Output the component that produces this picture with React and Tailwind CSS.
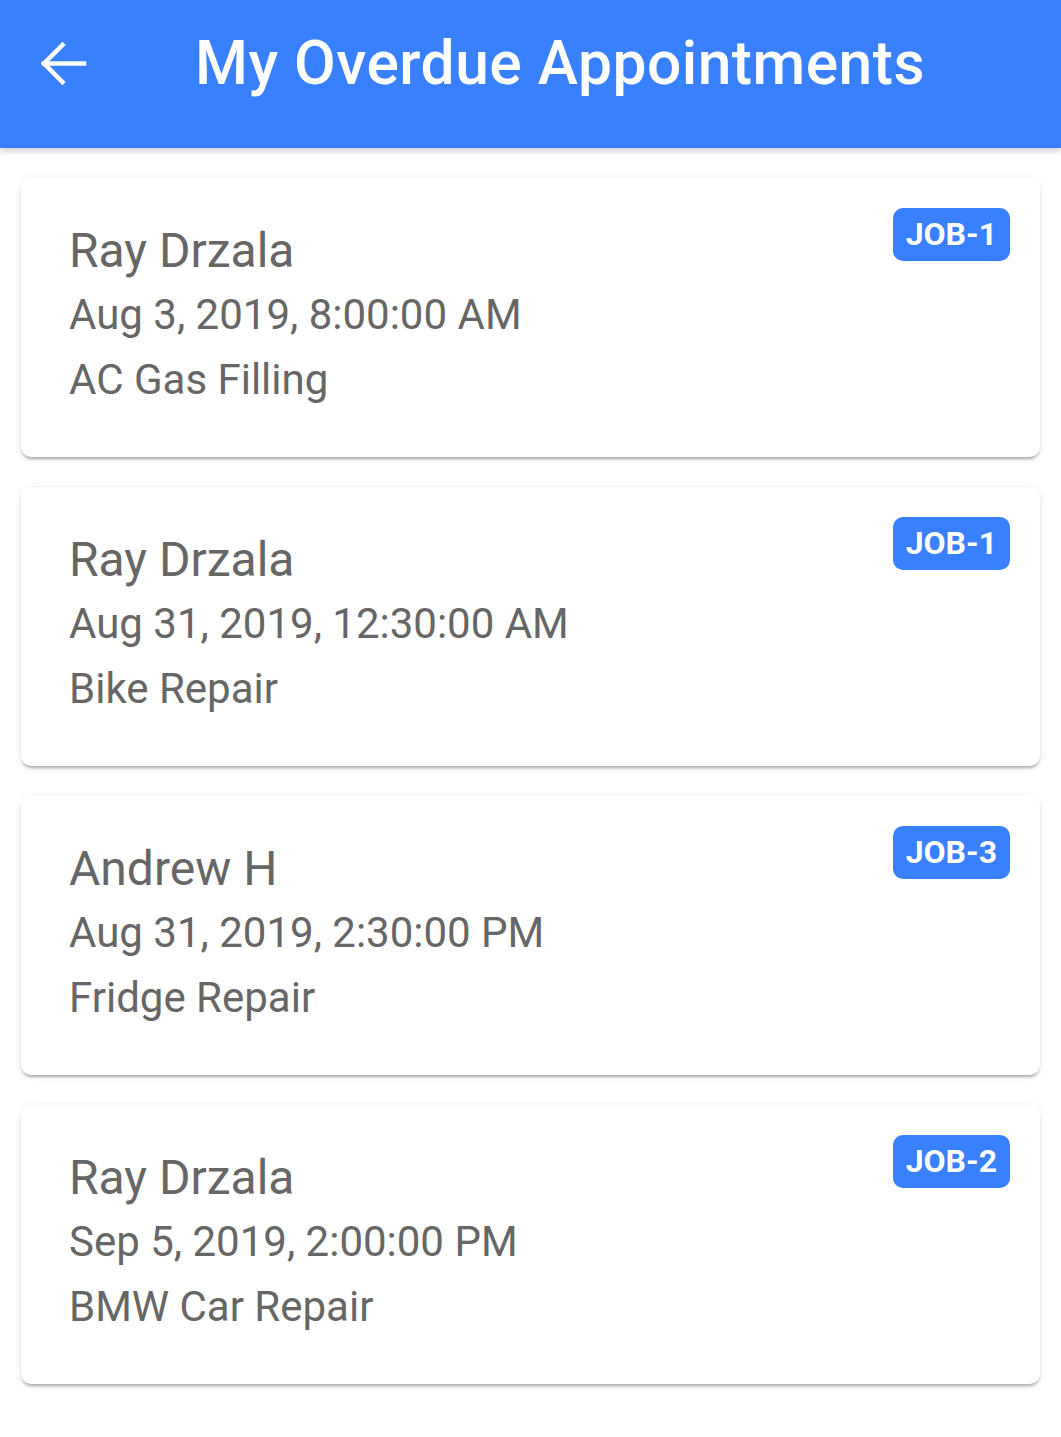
import React from "react";

const appointments = [
  { name: "Ray Drzala", date: "Aug 3, 2019, 8:00:00 AM", service: "AC Gas Filling", job: "JOB-1" },
  { name: "Ray Drzala", date: "Aug 31, 2019, 12:30:00 AM", service: "Bike Repair", job: "JOB-1" },
  { name: "Andrew H", date: "Aug 31, 2019, 2:30:00 PM", service: "Fridge Repair", job: "JOB-3" },
  { name: "Ray Drzala", date: "Sep 5, 2019, 2:00:00 PM", service: "BMW Car Repair", job: "JOB-2" },
];

const AppointmentCard = ({ item }) => (
  <div className="relative h-[279px] rounded-[10px] bg-white px-[48px] pt-[45px] shadow-[0_3px_3px_-1px_rgba(0,0,0,0.3),0_1px_10px_rgba(0,0,0,0.08)]">
    <span className="absolute right-[30px] top-[30px] flex h-[53px] items-center rounded-[10px] bg-[#3880ff] px-[13px] pb-[2px] text-[32px] font-bold leading-none text-white">
      {item.job}
    </span>
    <div className="text-[48px] leading-[56px] text-[#666666]">{item.name}</div>
    <div className="mt-[7px] text-[42px] leading-[58px] text-[#666666]">{item.date}</div>
    <div className="mt-[7px] text-[42px] leading-[58px] text-[#666666]">{item.service}</div>
  </div>
);

export default function App() {
  return (
    <div className="min-h-[1437px] bg-white font-['Roboto',sans-serif]">
      {/* Header */}
      <div className="relative z-10 flex h-[148px] items-center bg-[#3880ff] pb-[20px] shadow-[0_3px_6px_rgba(0,0,0,0.2)]">
        <button className="ml-[38px] flex h-[50px] w-[50px] items-center justify-center text-white">
          <svg width="50" height="50" viewBox="0 0 50 50" fill="none" stroke="currentColor" strokeWidth="4.5" strokeLinecap="square">
            <path d="M46 24.5H6" />
            <path d="M24.5 6L6 24.5L24.5 43" />
          </svg>
        </button>
        <h1 className="ml-[107px] text-[60.5px] font-medium tracking-[0.5px] text-white">
          My Overdue Appointments
        </h1>
      </div>

      {/* List */}
      <div className="flex flex-col gap-[30px] px-[21px] pt-[30px] pb-[52px]">
        {appointments.map((item, i) => (
          <AppointmentCard key={i} item={item} />
        ))}
      </div>
    </div>
  );
}
